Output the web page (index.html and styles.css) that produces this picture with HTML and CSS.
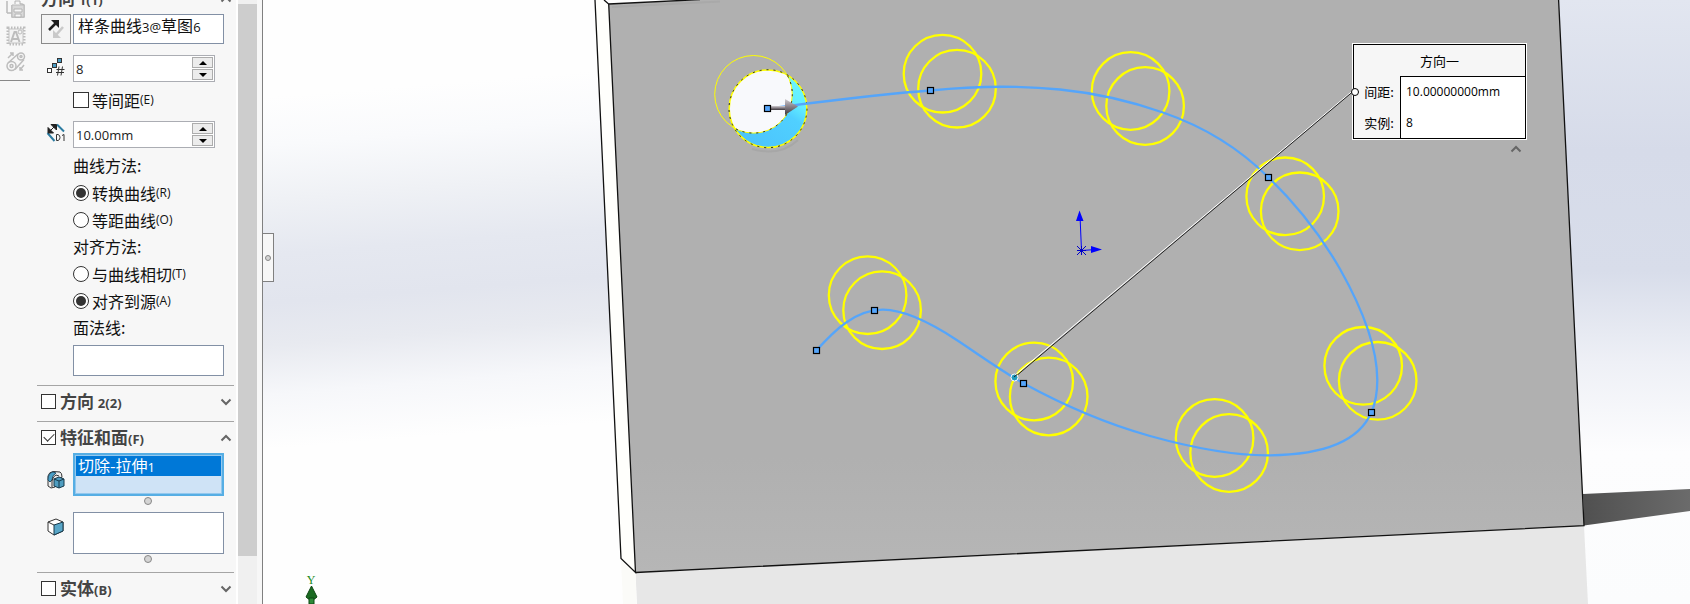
FILE: index.html
```html
<!DOCTYPE html>
<html lang="zh-CN">
<head>
<meta charset="utf-8">
<title>曲线驱动的阵列</title>
<link rel="stylesheet" href="styles.css">
</head>
<body>
<div class="app">
  <aside class="sidebar">
    <nav class="strip" aria-label="工具">
      <svg class="strip-icon" viewBox="0 0 20 20" aria-hidden="true"><path d="M1 13V1M1 13h5M6 5v12h12V5l-2-1h-2" fill="none" stroke="#bbb" stroke-width="1.500"/><path d="M6 5h12v12H6z" fill="#d9d9d9" stroke="#bbb"/><path d="M9 4V1h5v3M8 9h8v3H8zM9 14h6v3H9z" fill="#f7f7f7" stroke="#b4b4b4"/></svg>
      <svg class="strip-icon" viewBox="0 0 20 20" aria-hidden="true"><rect x="2" y="2" width="16" height="16" fill="none" stroke="#bdbdbd" stroke-width="3" stroke-dasharray="1.500 1.500"/><rect x="3" y="3" width="14" height="14" fill="#f3f3f3" stroke="#c4c4c4"/><path d="M5 16l3.500-10h1.500l3.500 10M6.500 13h6" fill="none" stroke="#bdbdbd" stroke-width="2"/><circle cx="14" cy="6" r="2" fill="none" stroke="#bdbdbd"/></svg>
      <svg class="strip-icon" viewBox="0 0 20 20" aria-hidden="true"><g fill="none" stroke="#bdbdbd" stroke-width="1.500"><circle cx="5.500" cy="14" r="4.500"/><circle cx="5.500" cy="14" r="1.500"/><circle cx="15" cy="4.500" r="3.500"/><circle cx="15" cy="4.500" r="1"/><path d="M2 11l10-9M9 17.500l9-10M2 6l5-5M4 1h3v3M18 13l-4 5M14 15v3h3"/></g></svg>
    </nav>
    <form class="panel">
      <div class="panel-content">
        <section class="section">
          <h2 class="section-head"><span>方向 <span class="lat">1(1)</span></span><button type="button" class="fold" aria-label="折叠"><svg viewBox="0 0 12 8"><path d="M1.500 6.500L6 2l4.500 4.500"/></svg></button></h2>
          <div class="row row-list">
            <button type="button" class="swap" aria-label="反向"><svg viewBox="0 0 28 28"><path d="M7 15l8-8" stroke="#1d1d1d" stroke-width="2.500"/><path d="M9 5h8v8z" fill="#1d1d1d"/><path d="M21 12l-7 8" stroke="#c9c9c9" stroke-width="2.500"/><path d="M11 15v8h8z" fill="#c9c9c9"/></svg></button>
            <div class="listbox" role="listbox" aria-label="方向参考"><div class="item" role="option">样条曲线<span class="lat">3@</span>草图<span class="lat">6</span></div></div>
          </div>
          <div class="row row-count">
            <svg class="icon" viewBox="0 0 20 20" aria-hidden="true"><g stroke="#333"><rect x="1.500" y="11.500" width="4" height="4" fill="#fff"/><rect x="6.500" y="6.500" width="4" height="4" fill="#4a9cc4"/><rect x="11.500" y="1.500" width="4" height="4" fill="#4a9cc4"/></g><path d="M13 9.500l-1.500 9M16.500 9.500l-1.500 9M10.500 12.500h8M10 15.500h8" fill="none" stroke="#333"/></svg>
            <span class="spin"><input type="text" value="8" aria-label="实例数"><span class="steps"><button type="button" aria-label="增加"></button><button type="button" class="down" aria-label="减少"></button></span></span>
          </div>
          <label class="check"><input type="checkbox">等间距<span class="lat key">(E)</span></label>
          <div class="row row-pitch">
            <svg class="icon" viewBox="0 0 20 20" aria-hidden="true"><path d="M1.500 10l7 8M11 1.500l7 7" stroke="#2c7ba0" stroke-width="2" fill="none"/><path d="M4 8l5-5M2 4.500V10h5.500zM5 1.500h5.500V7z" fill="#222" stroke="#222"/><path d="M10.500 11.500v6h1.500q2-.5 2-3t-2-3zM16 12.500l2-1v6.500" fill="none" stroke="#333"/></svg>
            <span class="spin"><input type="text" value="10.00mm" aria-label="间距"><span class="steps"><button type="button" aria-label="增加"></button><button type="button" class="down" aria-label="减少"></button></span></span>
          </div>
          <fieldset class="group">
            <legend>曲线方法:</legend>
            <label class="radio"><input type="radio" name="curve" checked>转换曲线<span class="lat key">(R)</span></label>
            <label class="radio"><input type="radio" name="curve">等距曲线<span class="lat key">(O)</span></label>
          </fieldset>
          <fieldset class="group">
            <legend>对齐方法:</legend>
            <label class="radio"><input type="radio" name="align">与曲线相切<span class="lat key">(T)</span></label>
            <label class="radio"><input type="radio" name="align" checked>对齐到源<span class="lat key">(A)</span></label>
          </fieldset>
          <div class="group"><div class="caption" id="normal">面法线:</div></div>
          <div class="row row-normal"><div class="listbox" role="listbox" aria-labelledby="normal"></div></div>
        </section>
        <section class="section closed">
          <h2 class="section-head"><label><input type="checkbox"><span>方向 <span class="lat">2(2)</span></span></label><button type="button" class="fold" aria-label="展开"><svg viewBox="0 0 12 8"><path d="M1.500 1.500L6 6l4.500-4.500"/></svg></button></h2>
        </section>
        <section class="section">
          <h2 class="section-head"><label><input type="checkbox" checked><span>特征和面<span class="lat">(F)</span></span></label><button type="button" class="fold" aria-label="折叠"><svg viewBox="0 0 12 8"><path d="M1.500 6.500L6 2l4.500 4.500"/></svg></button></h2>
          <div class="row row-feature">
            <svg class="icon" viewBox="0 0 20 20" aria-hidden="true"><path d="M2 16V6q1-4 5-4.500l7 .5q2 1 2 5l-7 10-4 1z" fill="#eee" stroke="#333"/><path d="M2 10q0-7 5-8l3 1q-4 2-4 7l-2 2z" fill="#4aa0c8" stroke="#24506a"/><path d="M6 17v-6q1-5 4-6l3 1" fill="none" stroke="#333"/><path d="M8 9l5-2 5 2v7l-5 2-5-2z" fill="#4f9dc0" stroke="#16384a"/><path d="M8 9l5 2 5-2M13 11v7" fill="none" stroke="#16384a"/></svg>
            <div class="listbox active" role="listbox" aria-label="要阵列的特征"><div class="item" role="option" aria-selected="true">切除-拉伸<span class="lat">1</span></div></div>
          </div>
          <div class="grip"></div>
          <div class="row row-face">
            <svg class="icon" viewBox="0 0 20 20" aria-hidden="true"><path d="M2 5l8-3 7 3v9l-9 4-6-4z" fill="#fff" stroke="#333"/><path d="M8 8l9-3v9l-9 4z" fill="#58a6c8" stroke="#16384a"/><path d="M2 5l6 3" stroke="#333"/></svg>
            <div class="listbox" role="listbox" aria-label="要阵列的面"></div>
          </div>
          <div class="grip"></div>
        </section>
        <section class="section">
          <h2 class="section-head"><label><input type="checkbox"><span>实体<span class="lat">(B)</span></span></label><button type="button" class="fold" aria-label="展开"><svg viewBox="0 0 12 8"><path d="M1.500 1.500L6 6l4.500-4.500"/></svg></button></h2>
        </section>
      </div>
    </form>
    <div class="scrollbar"><div class="thumb"></div></div>
  </aside>
  <main class="viewport">
    <svg class="scene" viewBox="263 0 1427 604" preserveAspectRatio="xMinYMin slice" aria-label="模型视图">
      <defs>
        <linearGradient id="sky" gradientUnits="userSpaceOnUse" x1="262" y1="0" x2="310" y2="604">
          <stop offset="0" stop-color="#fefefe"/><stop offset=".16" stop-color="#fefefe"/><stop offset=".24" stop-color="#f9fafc"/><stop offset=".33" stop-color="#eff1f5"/><stop offset=".42" stop-color="#e5e8f0"/><stop offset=".5" stop-color="#e2e5ee"/><stop offset=".57" stop-color="#e8eaf0"/><stop offset=".65" stop-color="#f6f7fa"/><stop offset=".74" stop-color="#fefefe"/><stop offset="1" stop-color="#fefefe"/>
        </linearGradient>
        <linearGradient id="skyRight" x1="0" y1="0" x2="0" y2="1">
          <stop offset="0" stop-color="#e2e6f0"/><stop offset=".25" stop-color="#d6dbe9"/><stop offset=".45" stop-color="#d8ddea"/><stop offset=".6" stop-color="#eef0f6"/><stop offset=".75" stop-color="#fdfdfe"/><stop offset="1" stop-color="#fbfcfd"/>
        </linearGradient>
        <linearGradient id="face" x1="0" y1="0" x2="0" y2="1">
          <stop offset="0" stop-color="#b0b0b0"/><stop offset=".8" stop-color="#b0b0b0"/><stop offset="1" stop-color="#b6b6b6"/>
        </linearGradient>
        <linearGradient id="shade" x1="0" y1="0" x2="1" y2="0">
          <stop offset="0" stop-color="#505050"/><stop offset="1" stop-color="#6b6b6b"/>
        </linearGradient>
        <linearGradient id="wall" x1=".3" y1="1" x2="1" y2="0">
          <stop offset="0" stop-color="#4cc4fc"/><stop offset=".5" stop-color="#50d0ff"/><stop offset=".65" stop-color="#62eeff"/><stop offset="1" stop-color="#70faff"/>
        </linearGradient>
        <linearGradient id="metal" x1="0" y1="0" x2="0" y2="1">
          <stop offset="0" stop-color="#d0ccd0"/><stop offset=".45" stop-color="#8c858c"/><stop offset="1" stop-color="#3c363a"/>
        </linearGradient>
        <clipPath id="hole"><circle cx="768" cy="108.700" r="38.800"/></clipPath>
        <g id="pair"><circle r="38.800"/><circle cx="14.500" cy="15" r="38.800"/></g>
        <rect id="knot" x="-3" y="-3" width="6" height="6"/>
      </defs>
      <rect x="262" width="1428" height="604" fill="url(#sky)"/>
      <rect x="1100" width="590" height="604" fill="url(#skyRight)"/>
      <path d="M1583 494L1690 489V511L1584 525.500z" fill="url(#shade)"/>
      <path d="M635.500 573L1584 526l4 78H637z" fill="#e7e7e7"/>
      <path d="M621 559l14.500 14 1 31H623z" fill="#fbfbf8"/>
      <path d="M595 0h9l5 4 26.500 568.500L621 558.500z" fill="#fffffc"/>
      <path d="M608.700 4L700 0h858.600L1584 525.700 635.500 572.500z" fill="url(#face)"/>
      <path d="M612 7L720 1.500" stroke="#a9a9a9" stroke-width="2"/>
      <path d="M595 0l26 558.500 14.500 14L608.700 4 604 0M608.700 4L700-.5M635.500 572.500L1584 525.700 1558.600 0" fill="none" stroke="#111" stroke-width="1.300"/>

      <path d="M752 149q28 8 46-9" fill="none" stroke="#a7a7a7" stroke-width="2"/>
      <circle cx="768" cy="108.700" r="38.800" fill="url(#wall)"/>
      <g clip-path="url(#hole)"><circle cx="753.500" cy="94.300" r="38.800" fill="#f8f9fc"/></g>
      <circle cx="753.500" cy="94.300" r="38.800" fill="none" stroke="#ff0"/>
      <g fill="none" stroke="#222" stroke-dasharray="2 5"><circle cx="768" cy="108.700" r="38.800" stroke="#ff0" stroke-width="1.500" stroke-dasharray="none"/><circle cx="768" cy="108.700" r="39"/><circle cx="753.500" cy="94.300" r="38.800" clip-path="url(#hole)"/></g>

      <g fill="none" stroke="#ff0" stroke-width="2.300">
        <use href="#pair" x="942.500" y="73.700"/><use href="#pair" x="1130.600" y="91"/><use href="#pair" x="1285.200" y="196.300"/><use href="#pair" x="1363.200" y="365.800"/><use href="#pair" x="1214.600" y="438"/><use href="#pair" x="1034.200" y="381.500"/><use href="#pair" x="867.600" y="295.200"/>
      </g>
      <path d="M767.600 108.500C820 102 880 94 930.300 90.500C975 86 1020 85.500 1060 89.500C1095 93 1130 101 1163 112.500C1205 127 1240 149 1268.500 177.500C1296 204 1321 236 1340 269C1362 308 1377.300 346 1377.300 380C1377.300 392 1375.500 403 1371.400 412.300C1357 446 1315 455.300 1267 455.300C1228 455.300 1186 446 1150 436C1105 423.500 1063 405 1023.300 383.300C1000 370 978 354 956.700 340C930 322.500 905 309.700 883 309.700C855 309.700 834 331 816.500 350.300" fill="none" stroke="#55a5fa" stroke-width="2.300"/>
      <path d="M770 106h16v4h-16z" fill="url(#metal)"/><path d="M785 99l13 7.500-13 8.500z" fill="url(#metal)"/>
      <path d="M1353 90.500L1014 376" stroke="#fff" stroke-width="1"/><path d="M1353 91.500L1015 377" stroke="#222" stroke-width="1"/>
      <g fill="#55a5fa" stroke="#000" stroke-width="1.200">
        <use href="#knot" x="767.500" y="108.500"/><use href="#knot" x="930.500" y="90.500"/><use href="#knot" x="1268.500" y="177.500"/><use href="#knot" x="1371.500" y="412.500"/><use href="#knot" x="1023.500" y="383.500"/><use href="#knot" x="874.500" y="310.500"/><use href="#knot" x="816.500" y="350.500"/>
      </g>
      <circle cx="1014.500" cy="377.500" r="3.500" fill="#1f9bbd" stroke="#fff"/>
      <path d="M1014 377l3-2.500" stroke="#222"/>
      <g stroke="#00f" fill="#00f"><path d="M1081.500 250.500L1080 216M1081.500 250.500L1096 249.500"/><path d="M1079.500 210.500l-3.500 10.500h7.500zM1102 249.500l-11-3.500v7z" stroke="none"/><path d="M1077 246l9 9M1086 246l-9 9M1077 250.500h9M1081.500 246v9" stroke="#0000c8"/></g>
      <text class="axis" x="311" y="584" text-anchor="middle">Y</text>
      <path d="M311.500 586l5.500 11-2.500 2h-6l-2.500-2z" fill="#1b6b22" stroke="#0d4612"/><path d="M309 598h5v6h-5z" fill="#2d8a38" stroke="#0d4612"/>
    </svg>
    <button type="button" class="collapse" aria-label="收起面板"><span></span></button>
    <div class="callout">
      <table>
        <thead><tr><th colspan="2">方向一</th></tr></thead>
        <tbody>
          <tr><th scope="row">间距:</th><td>10.00000000mm</td></tr>
          <tr><th scope="row">实例:</th><td>8</td></tr>
        </tbody>
      </table>
      <button type="button" class="callout-fold" aria-label="折叠"><svg viewBox="0 0 12 8"><path d="M1.500 6.500L6 2l4.500 4.500"/></svg></button>
    </div>
  </main>
</div>
</body>
</html>
```
FILE: styles.css
```css
* { box-sizing: border-box; }

body {
  margin: 0;
  font: 16px/20px "Noto Sans CJK SC", sans-serif;
  color: #111;
}

button { padding: 0; margin: 0; border: 0; background: none; font: inherit; }
svg { display: block; }

.app { display: flex; height: 100vh; overflow: hidden; }

.sidebar {
  display: flex;
  flex: 0 0 262px;
  min-width: 0;
  background: #f7f7f7;
}

.strip {
  display: flex;
  flex: none;
  flex-direction: column;
  gap: 6px;
  width: 30px;
  height: 81px;
  padding-left: 6px;
  border-bottom: 1px solid #888;
  overflow: hidden;
}
.strip-icon { flex: none; width: 20px; height: 20px; }

.panel { flex: 1; min-width: 0; padding: 0 2px 0 7px; overflow: hidden; border-right: 2px solid #fff; }
.panel-content { margin-top: -18px; }

.section { border-top: 1px solid #a5a5a5; }
.section.closed { padding-bottom: 4px; }

.section-head {
  display: flex;
  align-items: center;
  justify-content: space-between;
  height: 31px;
  margin: 0;
  padding: 0 2px 0 4px;
  font-size: 17px;
  font-weight: 700;
  color: #444;
}
.section-head label { display: flex; align-items: center; gap: 4px; }
.section-head .fold { width: 12px; height: 8px; }
.fold path, .callout-fold path { fill: none; stroke: #666; stroke-width: 2; }

.lat { font-family: "Open Sans", sans-serif; font-size: 13px; }
.lat.key { font-size: 12px; }

.row { display: grid; grid-template-columns: 32px minmax(0, 1fr); padding: 0 10px 0 4px; }
.row-list { height: 30px; margin-bottom: 11px; }
.row-count { height: 27px; margin-bottom: 10px; }
.row-pitch { height: 27px; margin: 13px 0 4px; }
.row-normal { height: 31px; margin: 4px 0 9px; }
.row-feature { height: 43px; }
.row-face { height: 42px; }
.icon { width: 20px; height: 20px; margin: 2px 0 0 5px; }
.row-feature .icon { margin-top: 17px; }
.row-face .icon { margin-top: 5px; }

.swap { width: 30px; height: 30px; border: 1px solid #8a8a8a; background: #f4f4f4; }
.swap svg { width: 28px; height: 28px; }

.listbox { grid-column: 2; border: 1px solid #8290a5; background: #fff; }
.item { height: 22px; padding-left: 4px; white-space: nowrap; }
.listbox.active { border: 2px solid #56aee4; outline: 1px solid #93c8ee; outline-offset: -3px; background: #cfe3f6; padding: 1px; }
.listbox.active .item { height: 20px; padding-left: 2px; line-height: 18px; background: #0078d7; color: #fff; }

.spin {
  display: flex;
  grid-column: 2;
  margin-right: 9px;
  padding: 1px;
  border: 1px solid #abadb3;
  background: #fff;
}
.spin input {
  flex: 1;
  min-width: 0;
  padding: 0 1px;
  border: 0;
  background: none;
  font: 13px "Open Sans", sans-serif;
  color: #222;
}
.steps { display: flex; flex-direction: column; gap: 1px; width: 21px; }
.steps button {
  display: flex;
  flex: 1;
  align-items: center;
  justify-content: center;
  border: 1px solid #acacac;
  background: #ececec;
}
.steps button::before { content: ""; border: 4px solid transparent; border-top: 0; border-bottom-color: #000; }
.steps .down::before { border: 4px solid transparent; border-bottom: 0; border-top-color: #000; }

.check, .radio { display: flex; align-items: center; white-space: nowrap; }
.check { height: 16px; margin-left: 36px; }
.group { min-width: 0; margin: 0 0 0 36px; padding: 0; border: 0; }
.group legend, .caption { padding: 0; height: 27px; line-height: 26px; }
.radio { height: 27px; }

input[type="checkbox"], input[type="radio"] {
  display: grid;
  flex: none;
  place-items: center;
  appearance: none;
  width: 16px;
  height: 16px;
  margin: 0 3px 0 0;
  border: 1px solid #333;
  background: #fff;
}
.section-head input[type="checkbox"] { width: 15px; height: 15px; margin: 0; }
input[type="radio"] { border-radius: 50%; }
input[type="radio"]:checked::before { content: ""; width: 10px; height: 10px; border-radius: 50%; background: #333; }
input[type="checkbox"]:checked::before {
  content: "";
  width: 9px;
  height: 5px;
  margin-bottom: 3px;
  border: solid #333;
  border-width: 0 0 1px 1px;
  transform: rotate(-45deg);
}

.grip { display: flex; justify-content: center; height: 16px; padding-top: 1px; margin-left: 25px; }
.grip::before, .collapse span {
  content: "";
  width: 6px;
  height: 6px;
  border: 1px solid #888;
  border-radius: 50%;
  background: #d4d4d4;
}
.row-face + .grip { height: 18px; }

.scrollbar { flex: none; width: 19px; margin-right: 5px; padding-top: 4px; background: #f0f0f0; }
.thumb { height: 92%; background: #cdcdcd; }

.viewport { position: relative; flex: 1; min-width: 0; border-left: 1px solid #808080; overflow: hidden; }
.scene { width: 100%; height: 100%; }
.axis { font: 12px "Liberation Serif", serif; fill: #1a8a1a; }

.collapse {
  position: absolute;
  left: 0;
  top: 233px;
  display: flex;
  align-items: center;
  justify-content: center;
  width: 11px;
  height: 49px;
  border: 1px solid #808080;
  border-left: 0;
  background: #f7f7f7;
}

.callout {
  position: absolute;
  left: 1090px;
  top: 44px;
  width: 173px;
}
.callout::before {
  content: "";
  position: absolute;
  left: -2px;
  top: 44px;
  width: 6px;
  height: 6px;
  border: 1px solid #000;
  border-radius: 50%;
  background: #fff;
}
.callout table {
  width: 100%;
  border: 1px solid #000;
  outline: 1px solid #fff;
  border-spacing: 0;
  background: #f6f6f6;
  font: 13px/18px "Noto Sans CJK SC", sans-serif;
  color: #000;
}
.callout th { height: 31px; padding: 0; font-weight: 400; }
.callout tbody th { width: 46px; padding-left: 4px; }
.callout td { padding: 0 5px; border-left: 1px solid #000; background: #fff; font: 12px/18px "Open Sans", sans-serif; }
.callout tbody tr:first-child td { border-top: 1px solid #000; }
.callout-fold { display: block; width: 12px; height: 8px; margin: 6px 4px 0 auto; }
```
